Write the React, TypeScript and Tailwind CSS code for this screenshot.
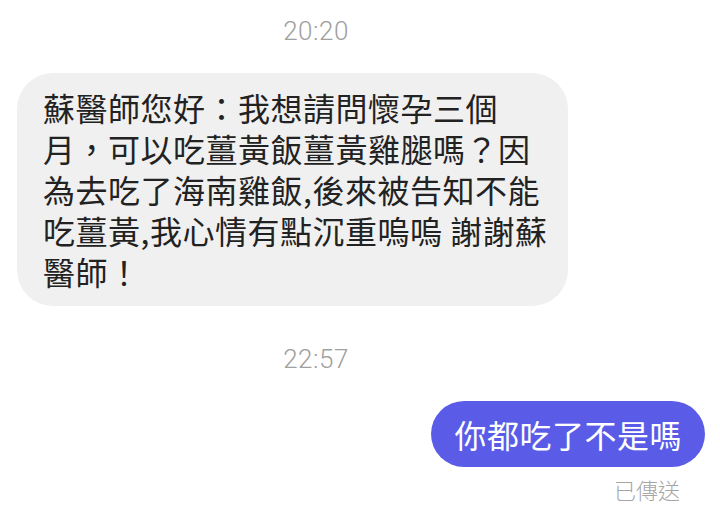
export default function App() {
  const lines = [
    "蘇醫師您好：我想請問懷孕三個",
    "月，可以吃薑黃飯薑黃雞腿嗎？因",
    "為去吃了海南雞飯,後來被告知不能",
    "吃薑黃,我心情有點沉重嗚嗚 謝謝蘇",
    "醫師！",
  ]

  return (
    <div className="w-[720px] h-[519px] bg-white overflow-hidden font-['Noto_Sans_CJK_TC',sans-serif]">
      {/* Time 1 */}
      <div className="w-[632px] pt-[16px] text-center text-[26px] leading-[30px] font-light tracking-[0.5px] text-[#a0a0a0] font-['Roboto','Noto_Sans_CJK_TC',sans-serif]">
        20:20
      </div>

      {/* Incoming bubble */}
      <div className="mt-[27px] ml-[17px] w-[551px] rounded-[36px] bg-[#f0f0f0] pl-[26px] pr-[20px] pt-[14px] pb-[14px] text-[32px] leading-[41px] tracking-[0.5px] text-[#222222]">
        {lines.map((line) => (
          <div key={line} className="whitespace-pre">
            {line}
          </div>
        ))}
      </div>

      {/* Time 2 */}
      <div className="mt-[38px] w-[632px] text-center text-[26px] leading-[30px] font-light tracking-[0.5px] text-[#a0a0a0] font-['Roboto','Noto_Sans_CJK_TC',sans-serif]">
        22:57
      </div>

      {/* Outgoing bubble */}
      <div className="mt-[27px] flex justify-end pr-[15px]">
        <div className="h-[66px] flex items-center rounded-full bg-[#5a5ce8] px-[23px] text-[32px] leading-[40px] tracking-[0.5px] text-white">
          你都吃了不是嗎
        </div>
      </div>
      <div className="mt-[8px] flex justify-end pr-[40px] text-[22px] leading-[28px] font-light text-[#a5a5a5]">
        已傳送
      </div>
    </div>
  )
}
